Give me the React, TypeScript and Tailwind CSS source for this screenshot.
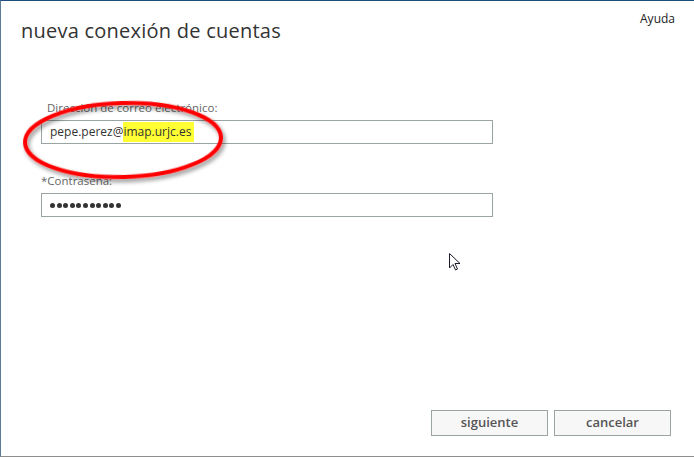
import React from "react";

export default function App() {
  const font = { fontFamily: '"Open Sans", "Noto Sans", sans-serif' };
  return (
    <div
      className="relative w-[694px] h-[457px] bg-white overflow-hidden border-t border-t-[#1d4f7a] border-l border-l-[#5b7c99] border-b border-b-[#8e8e8e] box-border"
      style={font}
    >
      <div className="flex justify-between items-start">
        <div className="pl-[20px] pt-[16px] text-[20px] leading-[28px] text-[#333333] tracking-[0.24px]">
          nueva conexión de cuentas
        </div>
        <div className="pr-[19px] pt-[10px] text-[12px] leading-[16px] text-[#222222]">
          Ayuda
        </div>
      </div>

      <div className="flex flex-col ml-[40px] mt-[55px] w-[452px]">
        <div className="pl-[6px] text-[11.5px] leading-[16px] text-[#666666]">
          Dirección de correo electrónico:
        </div>
        <div className="mt-[4px] h-[24px] border border-[#9aa4a4] flex items-center pl-[8px] text-[12px] text-[#333333]">
          <span>pepe.perez@</span>
          <span className="bg-[#ffff33] h-[20px] flex items-center pr-[3px]">imap.urjc.es</span>
        </div>
        <div className="mt-[29px] text-[11.5px] leading-[16px] text-[#666666]">*Contraseña:</div>
        <div className="mt-[4px] h-[24px] border border-[#9aa4a4] flex items-center pl-[8px] gap-[1.6px]">
          {Array.from({ length: 11 }).map((_, i) => (
            <span key={i} className="w-[5px] h-[5px] rounded-full bg-[#333333]" />
          ))}
        </div>
      </div>

      <div className="absolute left-[430px] top-[409px] flex gap-[6px]">
        <button className="w-[117px] h-[26px] bg-[#f7f7f7] border border-[#9aa4a4] text-[13px] font-semibold text-[#555555]">
          siguiente
        </button>
        <button className="w-[117px] h-[26px] bg-[#f7f7f7] border border-[#9aa4a4] text-[13px] font-semibold text-[#555555]">
          cancelar
        </button>
      </div>

      <svg className="absolute left-0 top-0 pointer-events-none" width="694" height="457">
        <defs>
          <filter id="sh" x="-20%" y="-40%" width="140%" height="180%">
            <feGaussianBlur in="SourceAlpha" stdDeviation="2" />
            <feOffset dx="2" dy="3" result="b" />
            <feComponentTransfer>
              <feFuncA type="linear" slope="0.45" />
            </feComponentTransfer>
            <feMerge>
              <feMergeNode />
              <feMergeNode in="SourceGraphic" />
            </feMerge>
          </filter>
        </defs>
        <ellipse
          cx="122"
          cy="139"
          rx="98"
          ry="37"
          fill="none"
          stroke="#ff0000"
          strokeWidth="4"
          transform="rotate(-1.5 122 139)"
          filter="url(#sh)"
        />
        <g transform="translate(448 252)">
          <path
            d="M0.5 0.5 L0.5 15 L4 11.5 L6.5 17 L8.5 16 L6 10.5 L11 10.5 Z"
            fill="#ffffff"
            stroke="#1a1a2a"
            strokeWidth="1"
            strokeLinejoin="round"
          />
        </g>
      </svg>
    </div>
  );
}
